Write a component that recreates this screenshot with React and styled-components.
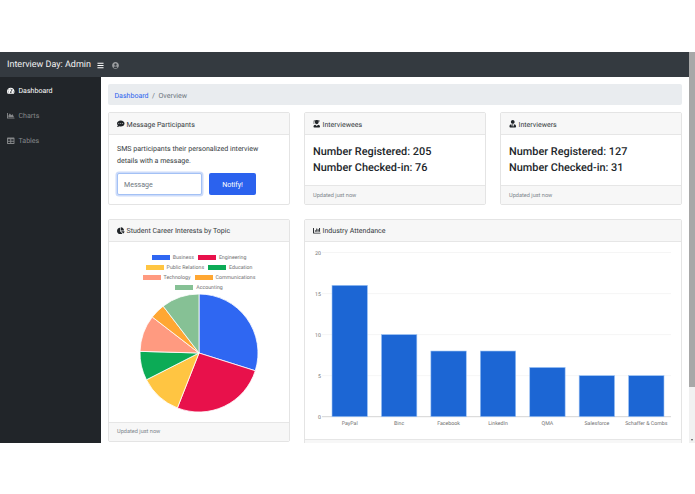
import React from "react";
import styled, { createGlobalStyle } from "styled-components";
import {
  FaTachometerAlt,
  FaChartArea,
  FaTable,
  FaBars,
  FaUserCircle,
  FaCommentDots,
  FaUserGraduate,
  FaUserTie,
  FaChartPie,
  FaChartBar,
} from "react-icons/fa";

const Global = createGlobalStyle`
  html, body {
    margin: 0;
    padding: 0;
    background: #fff;
    height: 100%;
    overflow: hidden;
  }
  * { box-sizing: border-box; }
  body {
    font-family: Roboto, "Noto Sans", sans-serif;
    font-size: 7.05px;
    color: #212529;
    text-rendering: geometricPrecision;
  }
`;

const Page = styled.div`
  height: 494px;
  padding: 52px 0 51px;
`;

const Frame = styled.div`
  height: 391px;
  display: flex;
  overflow: hidden;
`;

const Viewport = styled.div`
  flex: 1;
  min-width: 0;
  display: flex;
  flex-direction: column;
`;

const Scrollbar = styled.div`
  width: 6px;
  background: #f1f1f1;
  display: flex;
  flex-direction: column;
  justify-content: space-between;
`;

const Thumb = styled.div`
  height: 335px;
  background: #a8a8a8;
`;

const ArrowDown = styled.div`
  width: 0;
  height: 0;
  margin: 0 auto 2px;
  border-left: 1.5px solid transparent;
  border-right: 1.5px solid transparent;
  border-top: 2px solid #505050;
`;

const Navbar = styled.header`
  height: 25px;
  background: #343a40;
  display: flex;
  align-items: center;
  padding: 1px 0 0 7px;
  color: rgba(255, 255, 255, 0.5);
`;

const Brand = styled.div`
  color: #f2f2f2;
  font-size: 9px;
  margin-right: 6px;
`;

const NavIcon = styled.span`
  display: flex;
  font-size: 7px;
  margin-right: ${(p) => p.$gap || 0}px;
  color: ${(p) => p.$color || "inherit"};
`;

const Body = styled.div`
  flex: 1;
  display: flex;
  min-height: 0;
`;

const Sidebar = styled.nav`
  width: 101px;
  flex-shrink: 0;
  background: #212529;
  padding-top: 1px;
`;

const SideItem = styled.div`
  height: 25px;
  display: flex;
  align-items: center;
  gap: 4px;
  padding-left: 7px;
  color: ${(p) => (p.$active ? "#fff" : "rgba(255,255,255,0.45)")};
  svg { font-size: 7.5px; }
`;

const Content = styled.main`
  flex: 1;
  min-width: 0;
  padding: 7px;
  overflow: hidden;
`;

const Breadcrumb = styled.div`
  height: 21px;
  background: #e9ecef;
  border-radius: 2px;
  display: flex;
  align-items: center;
  padding: 1px 7px 0 6.5px;
  color: #6c757d;
  margin-bottom: 7px;
`;

const Crumb = styled.span`
  color: #2b62ee;
`;

const Slash = styled.span`
  margin: 0 3.5px;
`;

const Grid = styled.div`
  display: grid;
  grid-template-columns: repeat(3, 182px);
  column-gap: 14px;
  row-gap: 13.5px;
`;

const Card = styled.section`
  grid-column: span ${(p) => p.$span || 1};
  height: ${(p) => p.$height}px;
  display: flex;
  flex-direction: column;
  background: #fff;
  border: 1px solid #e4e4e4;
  border-radius: 2px;
`;

const CardHeader = styled.div`
  height: 22px;
  flex-shrink: 0;
  display: flex;
  align-items: center;
  gap: 2px;
  padding: 1px 0 0 8px;
  background: #f7f7f7;
  border-bottom: 1px solid #e6e6e6;
  color: #343a40;
  svg { font-size: 7.5px; color: #212529; }
`;

const CardBody = styled.div`
  flex: 1;
  min-height: 0;
  padding: ${(p) => p.$padding || "8.5px 8px"};
`;

const CardFooter = styled.div`
  height: 19px;
  flex-shrink: 0;
  display: flex;
  align-items: center;
  padding: 1px 0 0 8px;
  background: #f7f7f7;
  border-top: 1px solid #e6e6e6;
  color: #7d858c;
  font-size: 5.6px;
`;

const Lead = styled.p`
  margin: 0 0 7px;
  max-width: 150px;
  line-height: 11.5px;
  color: #343a40;
`;

const Form = styled.div`
  display: flex;
  gap: 7px;
`;

const MessageInput = styled.input`
  width: 85px;
  height: 22px;
  padding: 0 6px;
  font: inherit;
  border: 1px solid #a3c1f5;
  border-radius: 2px;
  box-shadow: 0 0 0 1.5px #cddcfa;
  outline: none;
  &::placeholder { color: #6c757d; opacity: 1; }
`;

const Button = styled.button`
  width: 47px;
  height: 22px;
  font: inherit;
  color: #fff;
  background: #2b62ee;
  border: 0;
  border-radius: 2px;
`;

const Stat = styled.div`
  font-size: 10.9px;
  font-weight: 500;
  line-height: 16px;
  color: #212529;
`;

const Legend = styled.div`
  display: flex;
  flex-wrap: wrap;
  justify-content: center;
  row-gap: 2px;
  column-gap: 4px;
  width: 130px;
  margin: 0 auto;
  padding-top: 8px;
  font-size: 5.25px;
  color: #707070;
`;

const LegendItem = styled.span`
  display: flex;
  align-items: center;
  gap: 3px;
  height: 8px;
`;

const Swatch = styled.i`
  width: 18px;
  height: 5.5px;
  background: ${(p) => p.$color};
`;

const PieSvg = styled.svg`
  display: block;
  margin: 1px auto 0;
`;

const BarSvg = styled.svg`
  display: block;
`;

const slices = [
  { label: "Business", color: "#2f67f2", end: 107.5 },
  { label: "Engineering", color: "#e8114b", end: 201.5 },
  { label: "Public Relations", color: "#ffc542", end: 243 },
  { label: "Education", color: "#0cab56", end: 271.6 },
  { label: "Technology", color: "#ff9a80", end: 307.6 },
  { label: "Communications", color: "#ffa733", end: 322.6 },
  { label: "Accounting", color: "#86c195", end: 360 },
];

const point = (deg, r, c) => {
  const a = ((deg - 90) * Math.PI) / 180;
  return `${(c + r * Math.cos(a)).toFixed(2)} ${(c + r * Math.sin(a)).toFixed(2)}`;
};

const PieChart = () => {
  const c = 60;
  const r = 59;
  let start = 0;
  return (
    <PieSvg width="120" height="120" viewBox="0 0 120 120">
      {slices.map((s) => {
        const d = `M${c} ${c}L${point(start, r, c)}A${r} ${r} 0 ${s.end - start > 180 ? 1 : 0} 1 ${point(s.end, r, c)}Z`;
        start = s.end;
        return <path key={s.label} d={d} fill={s.color} stroke="#fff" strokeWidth="0.8" />;
      })}
    </PieSvg>
  );
};

const bars = [
  ["PayPal", 16],
  ["Binc", 10],
  ["Facebook", 8],
  ["LinkedIn", 8],
  ["QMA", 6],
  ["Salesforce", 5],
  ["Schaffer & Combs", 5],
];

// origin is the card body, whose left sits at x=305
const BarChart = () => {
  const left = 20;
  const right = 366;
  const top = 10.5;
  const bottom = 174.7;
  const step = (right - left) / bars.length;
  const y = (v) => bottom - ((bottom - top) * v) / 20;
  return (
    <BarSvg width="376" height="197" viewBox="0 0 376 197">
      {[20, 15, 10, 5, 0].map((v) => (
        <g key={v}>
          <line x1={left - 3} x2={right} y1={y(v)} y2={y(v)} stroke={v ? "#f0f0f0" : "#d4d4d4"} strokeWidth={v ? 0.7 : 1} />
          <text x={left - 4} y={y(v) + 2} fontSize="5.25" fill="#707070" textAnchor="end">{v}</text>
        </g>
      ))}
      {bars.map(([name, v], i) => {
        const cx = left + step * (i + 0.5);
        return (
          <g key={name}>
            <rect x={cx - 17.7} y={y(v)} width="35.4" height={bottom - y(v)} fill="#1c66d4" stroke="#9cc3f5" strokeWidth="0.6" />
            <text x={cx} y={bottom + 8.5} fontSize="5.25" fill="#707070" textAnchor="middle">{name}</text>
          </g>
        );
      })}
    </BarSvg>
  );
};

export default function App() {
  return (
    <Page>
      <Global />
      <Frame>
        <Viewport>
          <Navbar>
            <Brand>Interview Day: Admin</Brand>
            <NavIcon $gap={8} $color="#fff"><FaBars /></NavIcon>
            <NavIcon><FaUserCircle /></NavIcon>
          </Navbar>
          <Body>
            <Sidebar>
              <SideItem $active><FaTachometerAlt />Dashboard</SideItem>
              <SideItem><FaChartArea />Charts</SideItem>
              <SideItem><FaTable />Tables</SideItem>
            </Sidebar>
            <Content>
              <Breadcrumb>
                <Crumb>Dashboard</Crumb>
                <Slash>/</Slash>
                Overview
              </Breadcrumb>
              <Grid>
                <Card $height={93}>
                  <CardHeader><FaCommentDots />Message Participants</CardHeader>
                  <CardBody $padding="8px 8px 0">
                    <Lead>SMS participants their personalized interview details with a message.</Lead>
                    <Form>
                      <MessageInput placeholder="Message" />
                      <Button>Notify!</Button>
                    </Form>
                  </CardBody>
                </Card>
                <Card $height={93}>
                  <CardHeader><FaUserGraduate />Interviewees</CardHeader>
                  <CardBody>
                    <Stat>Number Registered: 205</Stat>
                    <Stat>Number Checked-in: 76</Stat>
                  </CardBody>
                  <CardFooter>Updated just now</CardFooter>
                </Card>
                <Card $height={93}>
                  <CardHeader><FaUserTie />Interviewers</CardHeader>
                  <CardBody>
                    <Stat>Number Registered: 127</Stat>
                    <Stat>Number Checked-in: 31</Stat>
                  </CardBody>
                  <CardFooter>Updated just now</CardFooter>
                </Card>
                <Card $height={223}>
                  <CardHeader><FaChartPie />Student Career Interests by Topic</CardHeader>
                  <CardBody $padding="4px 0 0">
                    <Legend>
                      {slices.map((s) => (
                        <LegendItem key={s.label}>
                          <Swatch $color={s.color} />
                          {s.label}
                        </LegendItem>
                      ))}
                    </Legend>
                    <PieChart />
                  </CardBody>
                  <CardFooter>Updated just now</CardFooter>
                </Card>
                <Card $span={2} $height={240}>
                  <CardHeader><FaChartBar />Industry Attendance</CardHeader>
                  <CardBody $padding="0"><BarChart /></CardBody>
                  <CardFooter />
                </Card>
              </Grid>
            </Content>
          </Body>
        </Viewport>
        <Scrollbar>
          <Thumb />
          <ArrowDown />
        </Scrollbar>
      </Frame>
    </Page>
  );
}
